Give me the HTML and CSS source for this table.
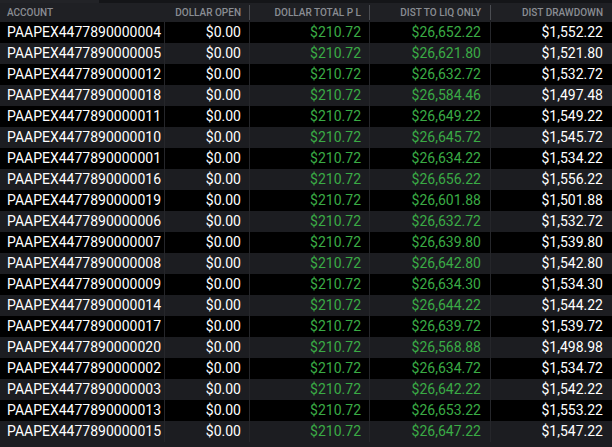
FILE: index.html
```html
<!DOCTYPE html>
<html>
<head>
<meta charset="utf-8">
<link rel="stylesheet" href="styles.css">
</head>
<body>
<div class="topbar"><div class="tab"></div></div>
<div class="grid">
  <div class="row head">
    <div class="c c1">ACCOUNT</div>
    <div class="c c2 r">DOLLAR OPEN</div>
    <div class="c c3 r">DOLLAR TOTAL P L</div>
    <div class="c c4 r">DIST TO LIQ ONLY</div>
    <div class="c c5 r">DIST DRAWDOWN</div>
  </div>
  <div id="rows"></div>
</div>
<script src="app.js"></script>
</body>
</html>
```
FILE: app.js
```js
const data = [
["0004","26,652.22","1,552.22"],
["0005","26,621.80","1,521.80"],
["0012","26,632.72","1,532.72"],
["0018","26,584.46","1,497.48"],
["0011","26,649.22","1,549.22"],
["0010","26,645.72","1,545.72"],
["0001","26,634.22","1,534.22"],
["0016","26,656.22","1,556.22"],
["0019","26,601.88","1,501.88"],
["0006","26,632.72","1,532.72"],
["0007","26,639.80","1,539.80"],
["0008","26,642.80","1,542.80"],
["0009","26,634.30","1,534.30"],
["0014","26,644.22","1,544.22"],
["0017","26,639.72","1,539.72"],
["0020","26,568.88","1,498.98"],
["0002","26,634.72","1,534.72"],
["0003","26,642.22","1,542.22"],
["0013","26,653.22","1,553.22"],
["0015","26,647.22","1,547.22"]
];
const host = document.getElementById('rows');
data.forEach((d, i) => {
  const row = document.createElement('div');
  row.className = 'row body ' + (i % 2 ? 'even' : 'odd');
  row.innerHTML =
    '<div class="c c1">PAAPEX447789000' + d[0] + '</div>' +
    '<div class="c c2 r">$0.00</div>' +
    '<div class="c c3 r green">$210.72</div>' +
    '<div class="c c4 r green">$' + d[1] + '</div>' +
    '<div class="c c5 r">$' + d[2] + '</div>';
  host.appendChild(row);
});
```
FILE: styles.css
```css
html, body {
  margin: 0;
  padding: 0;
  background: #1c1d21;
  width: 612px;
  height: 447px;
  overflow: hidden;
  font-family: Roboto, "Liberation Sans", sans-serif;
}
.topbar {
  height: 3px;
  background: #141518;
  display: flex;
}
.tab {
  width: 99px;
  background: #222327;
}
.row {
  display: grid;
  grid-template-columns: 165px 85px 120px 121px 121px;
}
.head {
  height: 19px;
  background: #1f2024;
  color: #8a8d93;
  font-size: 10px;
  font-weight: 500;
  align-items: center;
}
.head .c {
  height: 15px;
  line-height: 15px;
}
.head .c2, .head .c3, .head .c4 {
  border-right: 1px solid #4b4d52;
}
.head .c1 { padding-left: 7px; }
.head .c2 { padding-right: 8px; }
.head .c3 { padding-right: 8px; }
.head .c4 { padding-right: 9px; }
.head .c5 { padding-right: 9px; }
.body {
  height: 21px;
  line-height: 21px;
  font-size: 14px;
  color: #ffffff;
}
.odd { background: #000000; }
.even { background: #1c1d21; }
.body .c1, .body .c2, .body .c3, .body .c4 {
  border-right: 1px solid #25262a;
}
.body .c1 { padding-left: 7px; }
.body .c2 { padding-right: 8px; }
.body .c3 { padding-right: 8px; }
.body .c4 { padding-right: 9px; }
.body .c5 { padding-right: 9px; }
.c {
  white-space: nowrap;
  overflow: hidden;
  box-sizing: border-box;
}
.r { text-align: right; }
.green { color: #3aab45; }
```
